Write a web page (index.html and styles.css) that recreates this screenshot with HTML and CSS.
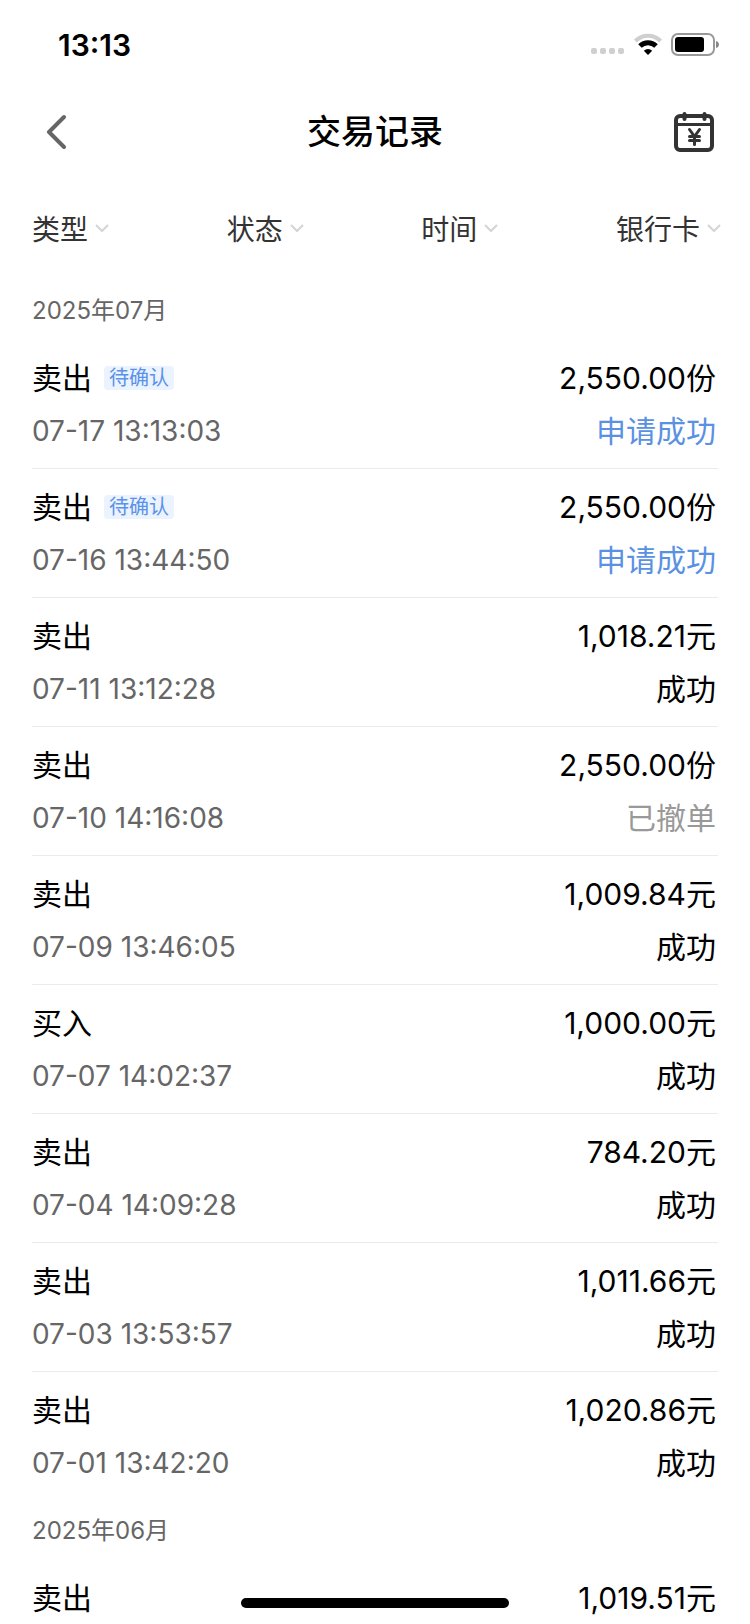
FILE: index.html
```html
<!doctype html>
<html lang="zh-CN">
<head>
    <meta charset="utf-8">
    <title>交易记录</title>
    <meta name="viewport" content="width=device-width, initial-scale=1">
    <link rel="stylesheet" href="styles.css">
</head>

<body>
<div class="status-bar">
    <span class="clock">13:13</span>
    <div class="status-icons">
        <svg width="34" height="24" viewBox="0 0 34 24" fill="#cfcfcf">
            <rect x="0" y="15" width="6" height="6" rx="2"/>
            <rect x="9" y="15" width="6" height="6" rx="2"/>
            <rect x="18" y="15" width="6" height="6" rx="2"/>
            <rect x="27" y="15" width="6" height="6" rx="2"/>
        </svg>
        <svg width="30" height="24" viewBox="0 0 30 24" fill="none" stroke-width="4">
            <path d="M2.4 8a17.600 17.600 0 0 1 25.200 0" stroke="#cfcfcf"/>
            <path d="M7 13a11.400 11.400 0 0 1 16 0" stroke="#000" stroke-width="5"/>
            <path d="M15 22l-4.200-4.200a6 6 0 0 1 8.400 0z" fill="#000"/>
        </svg>
        <svg width="48" height="24" viewBox="0 0 48 24">
            <rect x="1" y="1" width="42" height="21" rx="6" fill="none" stroke="#999" stroke-width="2"/>
            <rect x="4" y="4" width="29" height="15" rx="3"/>
            <path d="M45 8c4 1 4 6 0 7z" fill="#888"/>
        </svg>
    </div>
</div>

<header class="nav-bar">
    <button class="icon-button" aria-label="返回">
        <svg width="20" height="36" viewBox="0 0 20 36" fill="none" stroke="#666" stroke-width="4" stroke-linecap="round" stroke-linejoin="round">
            <path d="M18 3L3 18l15 15"/>
        </svg>
    </button>
    <h1>交易记录</h1>
    <button class="icon-button" aria-label="日历">
        <svg width="40" height="40" viewBox="0 0 40 40" fill="none" stroke="#333" stroke-width="4">
            <rect x="2" y="4" width="36" height="34" rx="4"/>
            <path d="M2 12.500h36" stroke-width="3"/>
            <path d="M10.500 2v5M30.500 2v5" stroke-linecap="round"/>
            <path d="M15.500 17.500l5 7 5-7M20.500 24.500v8M15.500 24.500h10M15.500 28.500h10" stroke-width="3" stroke-linecap="round"/>
        </svg>
    </button>
</header>

<nav class="filters">
    <button>类型<svg class="arrow" viewBox="0 0 14 8"><path d="M1 1l6 6 6-6"/></svg></button>
    <button>状态<svg class="arrow" viewBox="0 0 14 8"><path d="M1 1l6 6 6-6"/></svg></button>
    <button>时间<svg class="arrow" viewBox="0 0 14 8"><path d="M1 1l6 6 6-6"/></svg></button>
    <button>银行卡<svg class="arrow" viewBox="0 0 14 8"><path d="M1 1l6 6 6-6"/></svg></button>
</nav>

<main class="records">
    <h2>2025年07月</h2>
    <ul>
        <li>
            <div class="line"><span class="type">卖出<span class="tag">待确认</span></span><span>2,550.00份</span></div>
            <div class="line"><time>07-17 13:13:03</time><span class="pending">申请成功</span></div>
        </li>
        <li>
            <div class="line"><span class="type">卖出<span class="tag">待确认</span></span><span>2,550.00份</span></div>
            <div class="line"><time>07-16 13:44:50</time><span class="pending">申请成功</span></div>
        </li>
        <li>
            <div class="line"><span class="type">卖出</span><span>1,018.21元</span></div>
            <div class="line"><time>07-11 13:12:28</time><span>成功</span></div>
        </li>
        <li>
            <div class="line"><span class="type">卖出</span><span>2,550.00份</span></div>
            <div class="line"><time>07-10 14:16:08</time><span class="canceled">已撤单</span></div>
        </li>
        <li>
            <div class="line"><span class="type">卖出</span><span>1,009.84元</span></div>
            <div class="line"><time>07-09 13:46:05</time><span>成功</span></div>
        </li>
        <li>
            <div class="line"><span class="type">买入</span><span>1,000.00元</span></div>
            <div class="line"><time>07-07 14:02:37</time><span>成功</span></div>
        </li>
        <li>
            <div class="line"><span class="type">卖出</span><span>784.20元</span></div>
            <div class="line"><time>07-04 14:09:28</time><span>成功</span></div>
        </li>
        <li>
            <div class="line"><span class="type">卖出</span><span>1,011.66元</span></div>
            <div class="line"><time>07-03 13:53:57</time><span>成功</span></div>
        </li>
        <li>
            <div class="line"><span class="type">卖出</span><span>1,020.86元</span></div>
            <div class="line"><time>07-01 13:42:20</time><span>成功</span></div>
        </li>
    </ul>

    <h2>2025年06月</h2>
    <ul>
        <li>
            <div class="line"><span class="type">卖出</span><span>1,019.51元</span></div>
        </li>
    </ul>
</main>

<div class="home-indicator"></div>
</body>
</html>
```
FILE: styles.css
```css
* {
    box-sizing: border-box;
}

body {
    margin: 0;
    height: 100vh;
    display: flex;
    flex-direction: column;
    background: #fff;
    color: #000;
    font-family: Inter, "Noto Sans CJK SC", sans-serif;
    font-size: 30px;
}

button {
    border: 0;
    padding: 0;
    background: none;
    font: inherit;
    color: inherit;
    cursor: pointer;
}

svg {
    display: block;
}

/* 状态栏 */
.status-bar {
    flex: none;
    display: flex;
    align-items: center;
    justify-content: space-between;
    height: 90px;
    padding: 0 31px 0 58px;
}

.clock {
    font-size: 30px;
    font-weight: 600;
}

.status-icons {
    display: flex;
    gap: 8px;
}

/* 导航栏 */
.nav-bar {
    flex: none;
    display: flex;
    align-items: center;
    justify-content: space-between;
    height: 84px;
    padding: 0 36px;
}

.nav-bar h1 {
    margin: 0;
    padding-bottom: 6px;
    font-size: 34px;
    font-weight: 500;
}

.icon-button {
    display: flex;
    justify-content: center;
    width: 40px;
}

/* 筛选 */
.filters {
    flex: none;
    display: flex;
    justify-content: space-between;
    height: 107px;
    padding: 0 29px 0 32px;
    color: #333;
    font-size: 28px;
}

.filters button {
    display: flex;
    align-items: center;
    gap: 7px;
}

.arrow {
    width: 14px;
    height: 8px;
    fill: none;
    stroke: #d4d4d4;
    stroke-width: 2;
}

/* 交易列表 */
.records {
    flex: 1;
    min-height: 0;
    overflow: auto;
    padding: 0 32px;
    scrollbar-width: none;
}

.records h2 {
    margin: 0;
    color: #666;
    font-size: 24px;
    font-weight: 400;
    line-height: 59px;
}

.records ul {
    margin: 0;
    padding: 0;
    list-style: none;
}

.records li {
    display: flex;
    flex-direction: column;
    gap: 1px;
    height: 129px;
    padding-top: 12px;
    border-bottom: 1px solid #ebebeb;
}

.records li:last-child {
    border-bottom: 0;
}

.line {
    display: flex;
    align-items: center;
    justify-content: space-between;
    height: 52px;
    padding-right: 2px;
    line-height: 52px;
}

.type {
    display: flex;
    align-items: center;
    gap: 12px;
}

.tag {
    padding: 0 5px;
    border-radius: 4px;
    background: #ebf3fe;
    color: #5a91ea;
    font-size: 20px;
    line-height: 24px;
}

.records time {
    color: #666;
    font-size: 28px;
}

.pending {
    color: #5a91e2;
}

.canceled {
    color: #999;
}

/* 底部横条 */
.home-indicator {
    position: fixed;
    bottom: 16px;
    left: 50%;
    width: 268px;
    height: 10px;
    margin-left: -134px;
    border-radius: 5px;
    background: #000;
}
```
